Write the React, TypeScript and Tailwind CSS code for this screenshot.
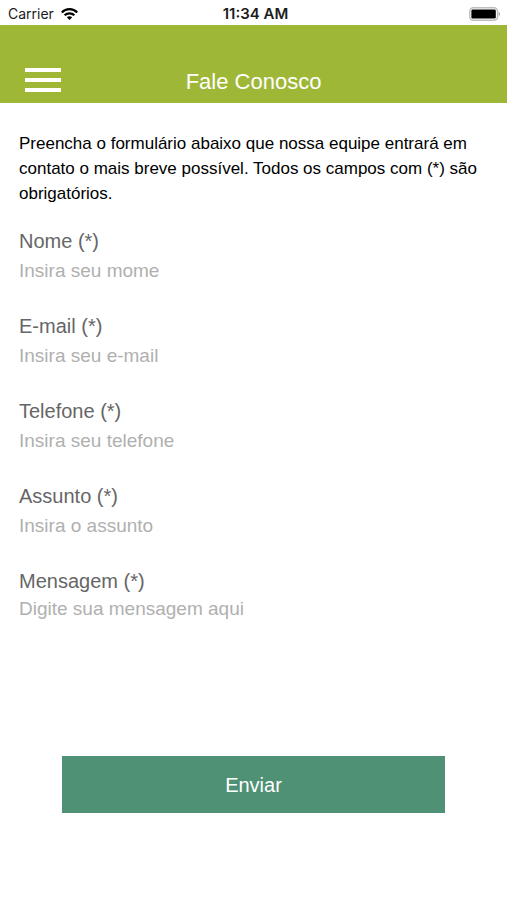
type FieldProps = {
  id: string;
  label: string;
  placeholder: string;
  type?: string;
};

const labelClass = "block text-[20px] leading-7 text-[#666666]";
const controlClass =
  "block w-full bg-transparent text-[19px] leading-6 text-[#333333] placeholder:text-[#b0b0b0] outline-none";

function Field({ id, label, placeholder, type = "text" }: FieldProps) {
  return (
    <div>
      <label htmlFor={id} className={labelClass}>
        {label}
      </label>
      <input id={id} name={id} type={type} placeholder={placeholder} className={`${controlClass} h-8`} />
    </div>
  );
}

function WifiIcon() {
  return (
    <svg viewBox="0 0 17 12" className="h-3 w-[17px]" fill="none" stroke="#000000" strokeWidth="2.2" aria-hidden="true">
      <path d="M0.8 4.4C5 0.1 12 0.1 16.2 4.4" />
      <path d="M3.6 7.3C6.3 4.6 10.7 4.6 13.4 7.3" />
      <path d="M8.5 11.9 5.8 9.2C7.3 7.8 9.7 7.8 11.2 9.2Z" fill="#000000" stroke="none" />
    </svg>
  );
}

function BatteryIcon() {
  return (
    <svg viewBox="0 0 32 14" className="h-[14px] w-8" aria-hidden="true">
      <rect x="0.8" y="0.8" width="27.8" height="12.4" rx="3.6" fill="#ffffff" stroke="#bdbdbd" strokeWidth="1.4" />
      <rect x="2.4" y="2.4" width="24.4" height="9.2" rx="1.4" fill="#000000" />
      <path d="M29.8 5C31.4 5.5 31.4 8.5 29.8 9Z" fill="#999999" />
    </svg>
  );
}

export default function App() {
  return (
    <div className="min-h-screen bg-white font-['Liberation_Sans',Arial,sans-serif]">
      <div className="grid h-[25px] grid-cols-3 items-center bg-white px-2 pt-0.5 font-[Inter,sans-serif] text-[14px] leading-5 text-[#1c1c1c]">
        <div className="flex items-center gap-[7px]">
          <span>Carrier</span>
          <WifiIcon />
        </div>
        <span className="pl-1 text-center text-[15px] font-semibold">11:34 AM</span>
        <div className="-mr-1 flex justify-end px-0.5">
          <BatteryIcon />
        </div>
      </div>

      <header className="grid h-[78px] grid-cols-[36px_1fr_36px] items-end bg-[#9eb736] px-[25px] pb-[7px]">
        <button type="button" aria-label="Menu" className="flex h-7 flex-col justify-start gap-[6px]">
          <span className="block h-1 w-9 bg-white" />
          <span className="block h-1 w-9 bg-white" />
          <span className="block h-1 w-9 bg-white" />
        </button>
        <h1 className="text-center text-[22px] leading-7 text-white">Fale Conosco</h1>
      </header>

      <main className="px-[19px] pt-7">
        <p className="text-[17px] leading-[25px] text-black">
          Preencha o formulário abaixo que nossa equipe entrará em contato o mais breve possível. Todos os campos com
          (*) são obrigatórios.
        </p>

        <form className="mt-[21px] flex flex-col gap-[25px]" onSubmit={(event) => event.preventDefault()}>
          <Field id="nome" label="Nome (*)" placeholder="Insira seu mome" />
          <Field id="email" label="E-mail (*)" placeholder="Insira seu e-mail" type="email" />
          <Field id="telefone" label="Telefone (*)" placeholder="Insira seu telefone" type="tel" />
          <Field id="assunto" label="Assunto (*)" placeholder="Insira o assunto" />
          <div>
            <label htmlFor="mensagem" className={labelClass}>
              Mensagem (*)
            </label>
            <textarea
              id="mensagem"
              name="mensagem"
              placeholder="Digite sua mensagem aqui"
              className={`${controlClass} h-[136px] resize-none pt-0.5`}
            />
          </div>
          <button type="submit" className="mx-[43px] h-[57px] bg-[#4e9175] text-[20px] leading-7 text-white">
            Enviar
          </button>
        </form>
      </main>
    </div>
  );
}
